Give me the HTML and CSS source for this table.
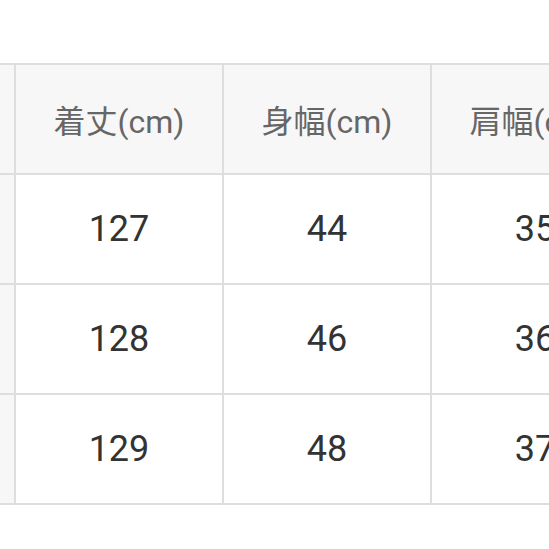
FILE: index.html
```html
<!DOCTYPE html>
<html lang="ja">
<head>
<meta charset="utf-8">
<link rel="stylesheet" href="styles.css">
</head>
<body>
<div class="viewport">
  <div class="grid">
    <div class="cell head side"></div>
    <div class="cell head">着丈(cm)</div>
    <div class="cell head">身幅(cm)</div>
    <div class="cell head">肩幅(cm)</div>

    <div class="cell side"></div>
    <div class="cell num">127</div>
    <div class="cell num">44</div>
    <div class="cell num">35</div>

    <div class="cell side"></div>
    <div class="cell num">128</div>
    <div class="cell num">46</div>
    <div class="cell num">36</div>

    <div class="cell side"></div>
    <div class="cell num">129</div>
    <div class="cell num">48</div>
    <div class="cell num">37</div>
  </div>
</div>
</body>
</html>
```
FILE: styles.css
```css
html, body {
  margin: 0;
  padding: 0;
  background: #ffffff;
  overflow: hidden;
}
.viewport {
  width: 549px;
  height: 549px;
  overflow: hidden;
  padding-top: 63px;
  box-sizing: border-box;
}
.grid {
  display: grid;
  grid-template-columns: repeat(4, 206px);
  grid-template-rows: repeat(4, 108px);
  gap: 2px;
  padding: 2px;
  background: #dedede;
  width: max-content;
  margin-left: -194px;
}
.cell {
  background: #ffffff;
  display: flex;
  align-items: center;
  justify-content: center;
  font-family: Roboto, "Noto Sans CJK JP", sans-serif;
}
.head {
  background: #f7f7f7;
  color: #666666;
  font-size: 32px;
}
.side {
  background: #f7f7f7;
}
.num {
  color: #333333;
  font-size: 36px;
}
```
